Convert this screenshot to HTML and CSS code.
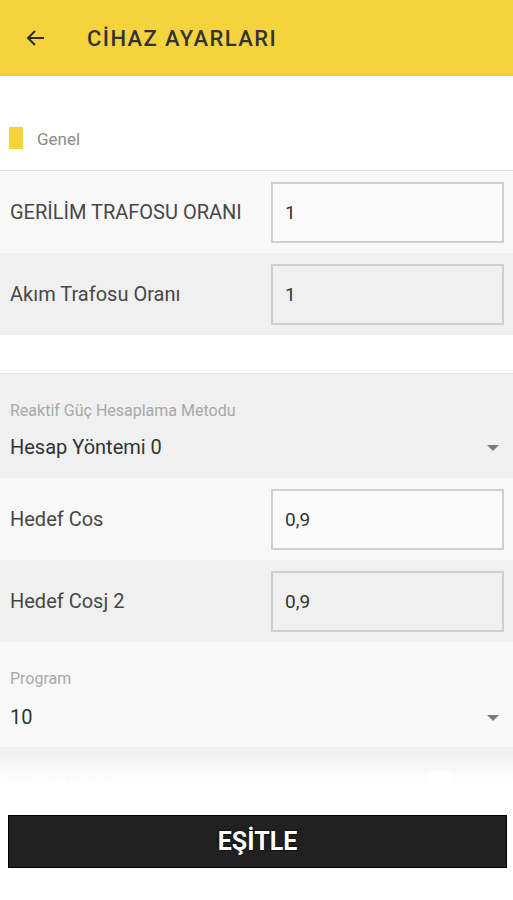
FILE: index.html
```html
<!DOCTYPE html>
<html lang="tr">
<head>
    <meta charset="UTF-8">
    <meta name="viewport" content="width=device-width, initial-scale=1.0">
    <title>Cihaz Ayarları</title>
    <link rel="stylesheet" href="styles.css">
</head>
<body>
    <div class="app">
        <header class="toolbar">
            <svg class="back" width="24" height="24" viewBox="0 0 24 24">
                <path d="M20 12H5M11 5l-7 7 7 7" fill="none" stroke="#2e2e2e" stroke-width="2"/>
            </svg>
            <h1>CİHAZ AYARLARI</h1>
        </header>

        <main class="content">
            <div class="section-title">
                <span class="mark"></span>
                <span>Genel</span>
            </div>

            <div class="row light">
                <label for="gerilim">GERİLİM TRAFOSU ORANI</label>
                <input type="text" id="gerilim" value="1">
            </div>
            <div class="row dark">
                <label for="akim">Akım Trafosu Oranı</label>
                <input type="text" id="akim" value="1">
            </div>

            <div class="gap"></div>

            <div class="picker dark">
                <span class="picker-label">Reaktif Güç Hesaplama Metodu</span>
                <div class="picker-value">
                    <span>Hesap Yöntemi 0</span>
                    <span class="caret"></span>
                </div>
            </div>

            <div class="row light">
                <label for="cos">Hedef Cos</label>
                <input type="text" id="cos" value="0,9">
            </div>
            <div class="row dark">
                <label for="cos2">Hedef Cosj 2</label>
                <input type="text" id="cos2" value="0,9">
            </div>

            <div class="picker light">
                <span class="picker-label">Program</span>
                <div class="picker-value">
                    <span>10</span>
                    <span class="caret"></span>
                </div>
            </div>

            <div class="row dark check-row">
                <label>Şifreli İletişim</label>
                <span class="check"></span>
            </div>
        </main>

        <footer class="footer">
            <button type="button">EŞİTLE</button>
        </footer>
    </div>
</body>
</html>
```

FILE: styles.css
```css
body, header, footer, input, button {
    box-sizing: border-box;
}

body {
    margin: 0;
    font-family: Roboto, "Noto Sans", sans-serif;
    background: #fff;
    color: #333;
}

.app {
    width: 513px;
    height: 900px;
    display: flex;
    flex-direction: column;
    overflow: hidden;
}

.toolbar {
    height: 76px;
    flex-shrink: 0;
    display: flex;
    align-items: center;
    background-color: #f5d33d;
    border-bottom: 2px solid #efcb2c;
    padding-left: 24px;
}

.toolbar .back {
    margin-top: 2px;
}

.toolbar h1 {
    margin: 2px 0 0 39px;
    font-size: 22px;
    font-weight: 500;
    letter-spacing: 1.4px;
    color: #333;
}

.content {
    flex: 1;
    overflow: hidden;
}

.section-title {
    display: flex;
    align-items: center;
    height: 95px;
    padding-left: 9px;
    padding-top: 32px;
    box-sizing: border-box;
    border-bottom: 1px solid #e3e3e3;
    font-size: 17px;
    color: #8a8a8a;
}

.section-title .mark {
    width: 14px;
    height: 22px;
    background-color: #f5d33d;
    margin-right: 14px;
    margin-top: -2px;
}

.row {
    height: 82px;
    display: flex;
    align-items: center;
    justify-content: space-between;
    padding: 0 9px 0 10px;
}

.row.light, .picker.light {
    background-color: #f8f8f8;
}

.row.dark, .picker.dark {
    background-color: #f0f0f0;
}

.row label {
    font-size: 20px;
    color: #474747;
}

.row input {
    width: 233px;
    height: 61px;
    border: 2px solid #cfcfcf;
    background: transparent;
    padding-left: 12px;
    font-family: inherit;
    font-size: 19px;
    color: #333;
    outline: none;
}

.row.light input {
    background-color: #fafafa;
}

.gap {
    height: 38px;
    border-bottom: 1px solid #e3e3e3;
}

.picker {
    height: 104px;
    padding: 27px 14px 0 10px;
    box-sizing: border-box;
}

.picker.light {
    height: 105px;
}

.picker-label {
    display: block;
    font-size: 16px;
    line-height: 19px;
    color: #a8a8a8;
}

.picker-value {
    display: flex;
    justify-content: space-between;
    align-items: center;
    margin-top: 16px;
    font-size: 20px;
    line-height: 23px;
    color: #333;
}

.picker.light .picker-value {
    margin-top: 18px;
}

.caret {
    width: 0;
    height: 0;
    border-left: 6px solid transparent;
    border-right: 6px solid transparent;
    border-top: 6px solid #7a7a7a;
}

.check-row {
    align-items: flex-start;
    padding-top: 24px;
}

.check-row label {
    color: #ddd;
}

.check {
    width: 24px;
    height: 24px;
    background: #fff;
    margin-right: 52px;
}

.footer {
    position: relative;
    height: 115px;
    flex-shrink: 0;
    background: #fff;
    padding: 30px 6px 0 8px;
}

.footer::before {
    content: "";
    position: absolute;
    left: 0;
    right: 0;
    top: -32px;
    height: 32px;
    background: linear-gradient(rgba(255, 255, 255, 0), rgba(255, 255, 255, 0.85) 70%, #fff);
}

.footer button {
    width: 100%;
    height: 53px;
    background-color: #212121;
    border: 1px solid #000;
    color: #fff;
    font-family: Roboto, sans-serif;
    font-size: 25px;
    font-weight: 700;
    text-shadow: 0 0 2px #000, 0 0 1px #000;
    cursor: pointer;
}
```
